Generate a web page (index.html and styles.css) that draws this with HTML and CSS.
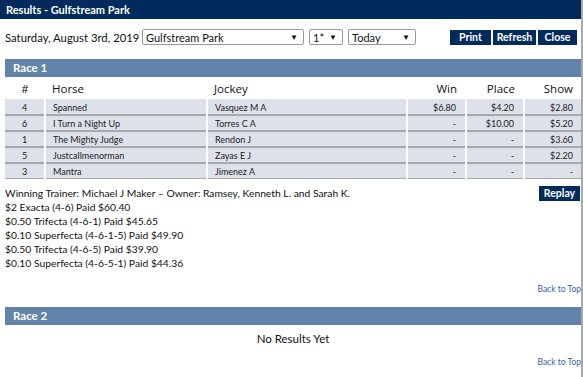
FILE: index.html
```html
<!DOCTYPE html>
<html lang="en">

<head>
    <meta charset="utf-8">
    <meta name="viewport" content="width=device-width, initial-scale=1.0">
    <title>Results - Gulfstream Park</title>

    <link rel="stylesheet" href="styles.css">
</head>

<body>
    <div class="page">
        <header class="top">Results - Gulfstream Park</header>

        <div class="toolbar">
            <span class="date">Saturday, August 3rd, 2019</span>
            <span class="pick track">Gulfstream Park <b>&#9660;</b></span>
            <span class="pick race_no">1* <b>&#9660;</b></span>
            <span class="pick day">Today <b>&#9660;</b></span>
            <span class="spacer"></span>
            <button class="btn print">Print</button>
            <button class="btn refresh">Refresh</button>
            <button class="btn close">Close</button>
        </div>

        <section class="race first">
            <h2 class="race_bar">Race 1</h2>
            <table class="results">
                <colgroup>
                    <col class="c_num">
                    <col class="c_horse">
                    <col class="c_jockey">
                    <col class="c_win">
                    <col class="c_place">
                    <col>
                </colgroup>
                <thead>
                    <tr>
                        <th class="num">#</th>
                        <th>Horse</th>
                        <th>Jockey</th>
                        <th class="money">Win</th>
                        <th class="money">Place</th>
                        <th class="money">Show</th>
                    </tr>
                </thead>
                <tbody>
                    <tr><td class="num">4</td><td>Spanned</td><td>Vasquez M A</td><td class="money">$6.80</td><td class="money">$4.20</td><td class="money">$2.80</td></tr>
                    <tr><td class="num">6</td><td>I Turn a Night Up</td><td>Torres C A</td><td class="money">-</td><td class="money">$10.00</td><td class="money">$5.20</td></tr>
                    <tr><td class="num">1</td><td>The Mighty Judge</td><td>Rendon J</td><td class="money">-</td><td class="money">-</td><td class="money">$3.60</td></tr>
                    <tr><td class="num">5</td><td>Justcallmenorman</td><td>Zayas E J</td><td class="money">-</td><td class="money">-</td><td class="money">$2.20</td></tr>
                    <tr><td class="num">3</td><td>Mantra</td><td>Jimenez A</td><td class="money">-</td><td class="money">-</td><td class="money">-</td></tr>
                </tbody>
            </table>

            <div class="payouts">
                <button class="btn replay">Replay</button>
                <p>Winning Trainer: Michael J Maker &ndash; Owner: Ramsey, Kenneth L. and Sarah K.</p>
                <p>$2 Exacta (4-6) Paid $60.40</p>
                <p>$0.50 Trifecta (4-6-1) Paid $45.65</p>
                <p>$0.10 Superfecta (4-6-1-5) Paid $49.90</p>
                <p>$0.50 Trifecta (4-6-5) Paid $39.90</p>
                <p>$0.10 Superfecta (4-6-5-1) Paid $44.36</p>
            </div>
            <a class="back" href="#">Back to Top</a>
        </section>

        <section class="race">
            <h2 class="race_bar">Race 2</h2>
            <p class="none">No Results Yet</p>
            <a class="back back_last" href="#">Back to Top</a>
        </section>
    </div>
</body>

</html>
```

FILE: styles.css
```css
body {
    margin: 0;
    font-family: Lato, "Open Sans", sans-serif;
    color: #111;
}

.page {
    width: 581px;
    height: 377px;
    border-right: 2px solid #a9a9a9;
    overflow: hidden;
}

.top {
    height: 19px;
    line-height: 19px;
    background: #002b5c;
    color: white;
    font-size: 11px;
    font-weight: bold;
    padding-left: 6px;
}

.toolbar {
    display: flex;
    align-items: center;
    margin-top: 10px;
    padding: 0 4px 0 5px;
    height: 16px;
}

.date {
    font-size: 11.3px;
    width: 137px;
}

.pick {
    display: flex;
    justify-content: space-between;
    align-items: center;
    box-sizing: border-box;
    height: 16px;
    border: 1px solid #999;
    border-radius: 2px;
    font-size: 11px;
    padding: 0 5px 0 3px;
    margin-right: 5px;
}

.pick b {
    font-size: 8px;
}

.track {
    width: 162px;
}

.race_no {
    width: 34px;
}

.day {
    width: 68px;
}

.spacer {
    flex: 1;
}

.btn {
    background: #002b5c;
    color: white;
    border: none;
    font-family: Lato, sans-serif;
    font-size: 10.5px;
    font-weight: bold;
    height: 15px;
    padding: 0;
    margin-left: 2px;
    line-height: 15px;
}

.print {
    width: 41px;
}

.refresh {
    width: 43px;
}

.close {
    width: 39px;
}

.race {
    margin-left: 5px;
}

.first {
    margin-top: 14px;
}

.race_bar {
    margin: 0;
    height: 18px;
    line-height: 18px;
    background: #6384a9;
    color: white;
    font-size: 11.5px;
    font-weight: bold;
    padding-left: 8px;
}

.results {
    width: 100%;
    border-collapse: collapse;
    table-layout: fixed;
}

.c_num { width: 40px; }
.c_horse { width: 162px; }
.c_jockey { width: 200px; }
.c_win { width: 59px; }
.c_place { width: 58px; }

.results th {
    font-family: "Open Sans", sans-serif;
    font-weight: normal;
    font-size: 11.5px;
    height: 22px;
    padding: 0 0 0 7px;
    text-align: left;
}

.results td {
    background: #dde1e9;
    font-size: 9px;
    height: 14px;
    padding: 0 0 0 7px;
    border-top: 2px solid #a9a9a9;
    border-left: 2px solid white;
    color: #222;
}

.results tbody tr:first-child td {
    border-top: 1px solid #dde1e9;
}

.results tbody tr:last-child td {
    border-bottom: 1px solid #a9a9a9;
}

.results td:first-child {
    border-left: none;
}

.results .num {
    text-align: center;
    padding: 0;
}

.results .money {
    text-align: right;
    padding: 0 9px 0 0;
}

.results .money:last-child {
    padding-right: 8px;
}

.payouts {
    margin-top: 7px;
    font-size: 10.3px;
    line-height: 14px;
}

.payouts p {
    margin: 0;
}

.replay {
    float: right;
    margin-top: 0;
    width: 41px;
    margin-right: 1px;
}

.back {
    display: block;
    text-align: right;
    font-size: 8.5px;
    color: #3a64a8;
    text-decoration: none;
    margin-top: 14px;
    padding-bottom: 13px;
}

.none {
    margin: 7px 0 0;
    text-align: center;
    font-size: 11.5px;
}

.back_last {
    margin-top: 12px;
}
```
